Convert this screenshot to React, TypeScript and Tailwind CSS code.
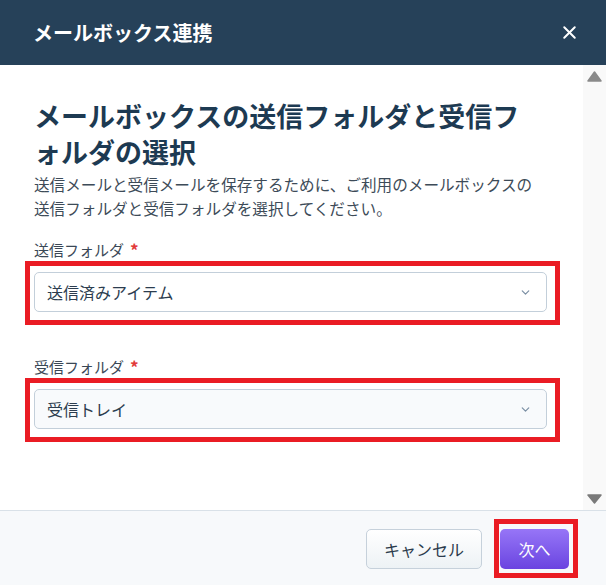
import { X, ChevronDown } from "lucide-react";

const font = { fontFamily: '"Noto Sans CJK JP", "Noto Sans", sans-serif' };

function SelectBox({
  label,
  value,
  tinted,
}: {
  label: string;
  value: string;
  tinted?: boolean;
}) {
  return (
    <div>
      <div className="flex items-center text-[15px] leading-[20px] text-[#3a4856]">
        <span>{label}</span>
        <span className="ml-[6px] text-[17px] font-bold leading-[20px] text-[#e23b3b]">*</span>
      </div>
      <div className="relative mt-[12px]">
        <button
          className={`flex h-[40px] w-full items-center justify-between rounded-[5px] border border-[#c3cfda] pl-[12px] pr-[14px] text-left text-[16px] text-[#2c3d4f] ${
            tinted ? "bg-[#f8fafc]" : "bg-white"
          }`}
        >
          <span>{value}</span>
          <ChevronDown className="h-[13px] w-[13px] text-[#7a8ea3]" strokeWidth={2.2} />
        </button>
        <div className="pointer-events-none absolute -top-[11px] -bottom-[13px] -left-[9px] -right-[13px] border-[5px] border-[#ea1c24]" />
      </div>
    </div>
  );
}

function Scrollbar() {
  return (
    <div className="flex w-[23px] flex-col items-center justify-between bg-[#f9f9f9] pt-[6px] pb-[6px]">
      <svg width="15" height="11" viewBox="0 0 15 11">
        <path d="M7.5 1 L14 10 L1 10 Z" fill="#8a8a8a" stroke="#8a8a8a" strokeLinejoin="round" strokeWidth="1.5" />
      </svg>
      <svg width="15" height="10" viewBox="0 0 15 10">
        <path d="M1 1 L14 1 L7.5 9 Z" fill="#7a7a7a" stroke="#7a7a7a" strokeLinejoin="round" strokeWidth="1.5" />
      </svg>
    </div>
  );
}

export default function App() {
  return (
    <div className="flex h-[585px] w-[606px] flex-col overflow-hidden bg-white" style={font}>
      <div className="flex h-[65px] shrink-0 items-center justify-between bg-[#264159] pl-[33px] pr-[26px]">
        <h1 className="text-[20px] font-bold text-white">メールボックス連携</h1>
        <X className="h-[21px] w-[21px] text-white" strokeWidth={2.3} />
      </div>

      <div className="flex min-h-0 flex-1">
        <div className="flex-1 pl-[34px] pr-[36px] pt-[33px]">
          <h2 className="whitespace-nowrap text-[27px] font-bold leading-[36px] text-[#1d3a52]">
            メールボックスの送信フォルダと受信フ
            <br />
            ォルダの選択
          </h2>
          <p className="mt-[2px] whitespace-nowrap text-[15.6px] leading-[24px] text-[#3d4b58]">
            送信メールと受信メールを保存するために、ご利用のメールボックスの
            <br />
            送信フォルダと受信フォルダを選択してください。
          </p>
          <div className="mt-[20px]">
            <SelectBox label="送信フォルダ" value="送信済みアイテム" />
          </div>
          <div className="mt-[45px]">
            <SelectBox label="受信フォルダ" value="受信トレイ" tinted />
          </div>
        </div>
        <Scrollbar />
      </div>

      <div className="flex h-[75px] shrink-0 items-start justify-end gap-[18px] border-t border-[#d9e1e8] bg-[#f7f9fb] pr-[37px] pt-[18px]">
        <button className="h-[40px] w-[116px] rounded-[5px] border border-[#c6d1db] bg-gradient-to-b from-white to-[#edf2f5] text-[16px] text-[#2b3b4c]">
          キャンセル
        </button>
        <div className="relative">
          <button className="h-[40px] w-[69px] rounded-[5px] bg-gradient-to-b from-[#9775f7] to-[#6b43e0] text-[16px] text-white">
            次へ
          </button>
          <div className="pointer-events-none absolute -top-[10px] -bottom-[9px] -left-[6px] -right-[9px] border-[5px] border-[#ea1c24]" />
        </div>
      </div>
    </div>
  );
}
